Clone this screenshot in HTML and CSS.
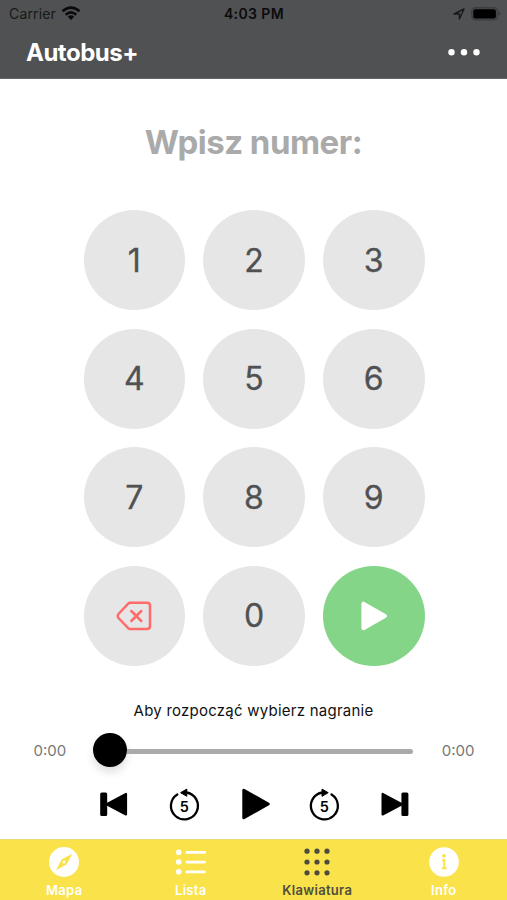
FILE: index.html
```html
<!DOCTYPE html>
<html lang="pl">
<head>
<meta charset="utf-8">
<title>Autobus+</title>
<link rel="stylesheet" href="styles.css">
</head>
<body>
<div class="app">
  <header class="header">
    <div class="status">
      <div class="carrier"><span class="carrier-name">Carrier</span>
        <svg class="wifi" width="20" height="15" viewBox="0 0 20 15"><g fill="none" stroke="#0b0b0c" stroke-width="2.6"><path d="M1.5 5.3Q10 -2.2 18.5 5.3"/><path d="M4.7 8.7Q10 4 15.3 8.7"/></g><path d="M6.8 10.7Q10 8 13.2 10.7L10 14Z" fill="#0b0b0c"/></svg>
      </div>
      <span class="clock">4:03 PM</span>
      <div class="indicators">
        <svg width="12" height="12" viewBox="0 0 12 12"><path d="M1 6L11 1L6.4 11V6Z" fill="none" stroke="#18191a" stroke-width="1.4" stroke-linejoin="round"/></svg>
        <svg width="30" height="14" viewBox="0 0 30 14"><rect x=".6" y=".6" width="26.4" height="12.4" rx="4" fill="#454648" stroke="#3b3c3e"/><rect x="2.3" y="2.3" width="22.6" height="9.2" rx="2.2" fill="#000"/><path d="M28 4.8Q30.5 6.8 28 8.8Z" fill="#353638"/></svg>
      </div>
    </div>
    <div class="titlebar">
      <h1 class="title">Autobus+</h1>
      <svg width="34" height="8" viewBox="0 0 34 8" fill="#fff"><circle cx="4.5" cy="3.2" r="3.2"/><circle cx="17" cy="3.2" r="3.2"/><circle cx="29.5" cy="3.2" r="3.2"/></svg>
    </div>
  </header>
  <main class="main">
    <h2 class="prompt"><span>Wpisz numer:</span></h2>
    <div class="keypad">
      <button class="key">1</button><button class="key">2</button><button class="key">3</button>
      <button class="key">4</button><button class="key">5</button><button class="key">6</button>
      <button class="key">7</button><button class="key">8</button><button class="key">9</button>
      <button class="key" aria-label="Usuń"><svg width="36" height="30" viewBox="0 0 36 30" fill="none" stroke="#ff6b6b" stroke-width="2.5" stroke-linejoin="round" stroke-linecap="round"><path d="M14 1.7H31Q34 1.7 34 4.7V25Q34 28 31 28H14Q13 28 12.2 27.2L2.5 17Q1 15 2.5 13L12.2 2.6Q13 1.7 14 1.7Z"/><path d="M15.3 10L25.3 20M25.3 10L15.3 20"/></svg></button>
      <button class="key">0</button>
      <button class="key go" aria-label="Odtwórz"><svg width="28" height="30" viewBox="0 0 28 30"><path d="M3.4 2.7V27.3L24.9 15Z" fill="#fff" stroke="#fff" stroke-width="4" stroke-linejoin="round"/></svg></button>
    </div>
    <p class="hint"><span>Aby rozpocząć wybierz nagranie</span></p>
    <div class="progress">
      <span class="time">0:00</span>
      <div class="slider"><i class="thumb"></i><i class="track"></i></div>
      <span class="time">0:00</span>
    </div>
    <div class="controls">
      <svg viewBox="0 0 70 36"><rect x="22" y="6.5" width="7" height="23.5" rx="1.5"/><path d="M47.8 8V28.5L28.5 18.2Z" stroke="#000" stroke-width="2.2" stroke-linejoin="round"/></svg>
      <svg viewBox="0 0 70 36"><path d="M29.1 8.4A13.5 13.5 0 1 0 38.1 6.5" fill="none" stroke="#000" stroke-width="2.3" stroke-linecap="round"/><path d="M32.4 6.7L38.6 3.1V10.3Z" stroke="#000" stroke-linejoin="round"/><text x="36.2" y="25.6">5</text></svg>
      <svg viewBox="0 0 70 36"><path d="M25.6 4.2V31.8L50 18Z" stroke="#000" stroke-width="3" stroke-linejoin="round"/></svg>
      <svg viewBox="0 0 70 36"><path d="M42.3 8.4A13.5 13.5 0 1 1 33.3 6.5" fill="none" stroke="#000" stroke-width="2.3" stroke-linecap="round"/><path d="M39 6.7L32.8 3.1V10.3Z" stroke="#000" stroke-linejoin="round"/><text x="35.2" y="25.6">5</text></svg>
      <svg viewBox="0 0 70 36"><rect x="42.2" y="6.5" width="7" height="23.5" rx="1.5"/><path d="M23.4 8V28.5L42.7 18.2Z" stroke="#000" stroke-width="2.2" stroke-linejoin="round"/></svg>
    </div>
  </main>
  <nav class="tabs">
    <a class="tab"><svg width="32" height="32" viewBox="0 0 32 32"><circle cx="16" cy="16" r="15" fill="#fff"/><path d="M24.3 7.8L18.6 18.4L8 24.2L13.5 13.5Z" fill="#fae24b"/><circle cx="16" cy="16" r="1.5" fill="#fff"/></svg><span>Mapa</span></a>
    <a class="tab"><svg width="32" height="32" viewBox="0 0 32 32" fill="#fff"><circle cx="3.7" cy="6.3" r="2.8"/><circle cx="3.7" cy="16" r="2.8"/><circle cx="3.7" cy="25.8" r="2.8"/><rect x="10.5" y="5" width="20.5" height="2.8" rx="1.4"/><rect x="10.5" y="14.7" width="20.5" height="2.8" rx="1.4"/><rect x="10.5" y="24.5" width="20.5" height="2.8" rx="1.4"/></svg><span>Lista</span></a>
    <a class="tab active"><svg width="32" height="32" viewBox="0 0 32 32" fill="#4d4b3f"><circle cx="6" cy="5.2" r="2.6"/><circle cx="16" cy="5.2" r="2.6"/><circle cx="26" cy="5.2" r="2.6"/><circle cx="6" cy="16" r="2.6"/><circle cx="16" cy="16" r="2.6"/><circle cx="26" cy="16" r="2.6"/><circle cx="6" cy="26.8" r="2.6"/><circle cx="16" cy="26.8" r="2.6"/><circle cx="26" cy="26.8" r="2.6"/></svg><span>Klawiatura</span></a>
    <a class="tab"><svg width="32" height="32" viewBox="0 0 32 32"><circle cx="16" cy="16" r="14.8" fill="#fff"/><circle cx="16" cy="9.8" r="1.9" fill="#fae24b"/><path d="M14 14.3H16.3V22M14 22.2H18.5" fill="none" stroke="#fae24b" stroke-width="2"/></svg><span>Info</span></a>
  </nav>
</div>
</body>
</html>
```
FILE: styles.css
```css
* { box-sizing: border-box; margin: 0; padding: 0; }
body { font-family: Inter, "Liberation Sans", sans-serif; background: #fff; }
svg { display: block; flex: none; }
.app { width: 507px; height: 900px; display: flex; flex-direction: column; overflow: hidden; }
.header { height: 79px; background: #505153; border-bottom: 1px solid #656668; }
.status { height: 27px; display: grid; grid-template-columns: 1fr auto 1fr; align-items: center; padding: 0 6px 0 9px; }
.carrier { display: flex; align-items: center; gap: 5px; color: #171819; font-size: 14px; letter-spacing: .15px; }
.clock { font-size: 14px; font-weight: 600; color: #0b0b0c; letter-spacing: .4px; margin-right: 2px; }
.indicators { display: flex; align-items: center; justify-content: flex-end; gap: 6px; }
.titlebar { height: 51px; display: flex; align-items: center; justify-content: space-between; padding: 0 26px; }
.title { font-size: 24px; font-weight: 700; letter-spacing: -.5px; color: #fff; }
.main { height: 760px; display: flex; flex-direction: column; align-items: center; }
.prompt { height: 131px; line-height: 126px; font-size: 33px; font-weight: 700; letter-spacing: -.5px; color: #aaa; }
.keypad { width: 341px; margin-left: 1px; display: grid; grid-template-columns: repeat(3, 101.5px); grid-auto-rows: 100px; justify-content: space-between; row-gap: 18.5px; }
.key { display: flex; align-items: center; justify-content: center; border: 0; border-radius: 50%; background: #e6e6e6; color: #505153; font: 400 32px Inter, sans-serif; -webkit-text-stroke: .3px #505153; }
.go { background: #84d588; }
.hint { margin-top: 33.5px; height: 24px; line-height: 24px; font-size: 15px; letter-spacing: .24px; color: #111; }
.progress { width: 441px; margin-left: 1px; height: 54px; display: flex; align-items: center; justify-content: space-between; }
.time { font-size: 15px; color: #777; }
.slider { width: 320px; display: flex; align-items: center; margin-right: 2px; }
.thumb { width: 34px; height: 34px; border-radius: 50%; background: #000; box-shadow: 0 5px 9px rgba(0, 0, 0, .13); }
.track { flex: 1; height: 5px; border-radius: 0 3px 3px 0; background: #aaa; margin-top: 2px; }
.controls { width: 352px; height: 36px; margin-top: 8.5px; display: grid; grid-template-columns: repeat(5, 1fr); }
.controls svg { width: 100%; height: 36px; }
.controls text { font: 600 14.5px Inter, sans-serif; text-anchor: middle; }
.tabs { height: 61px; padding-left: 1px; background: #fae24b; border-top: 1px solid #eadb76; display: grid; grid-template-columns: repeat(4, 1fr); }
.tab { display: flex; flex-direction: column; align-items: center; padding-top: 6px; color: #fff; font-size: 13px; font-weight: 600; line-height: 16px; letter-spacing: .3px; }
.tab span { margin-top: 4px; }
.active { color: #504e40; }
```
